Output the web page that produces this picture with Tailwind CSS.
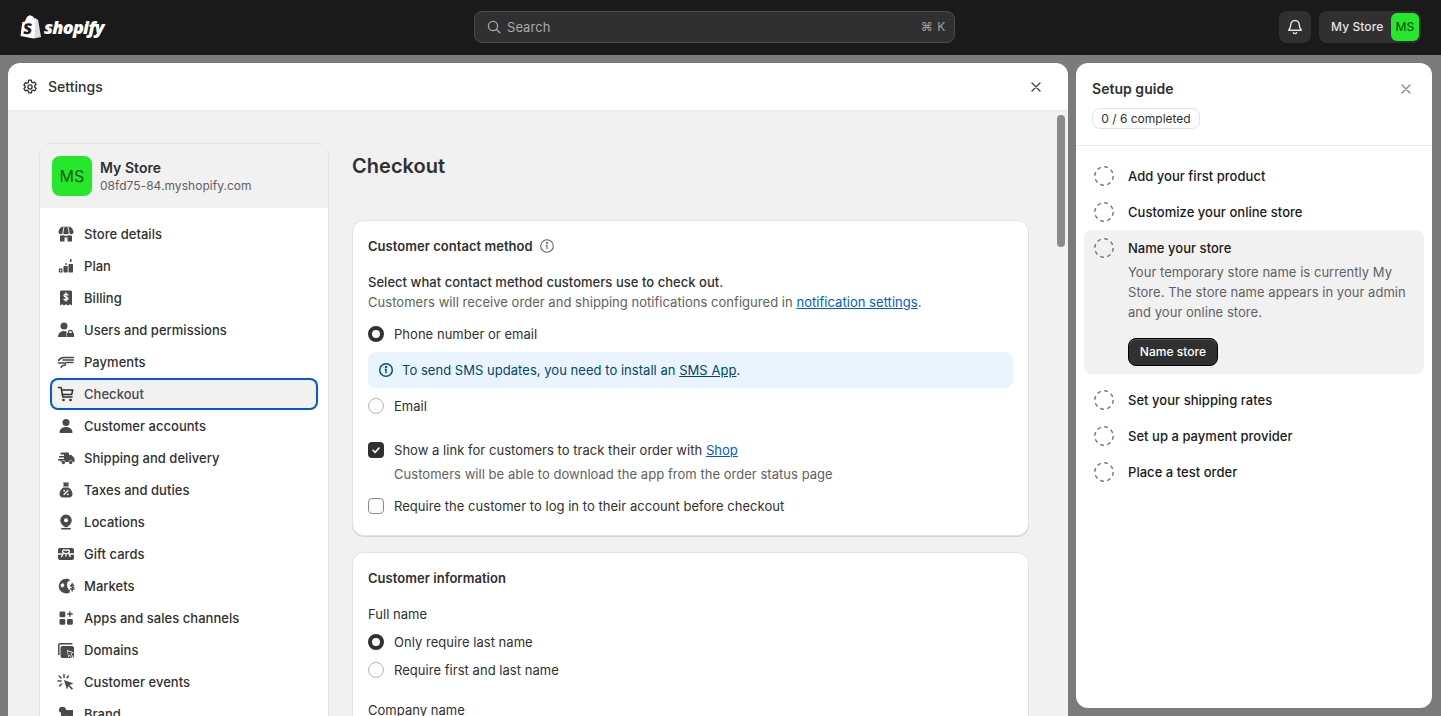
<!DOCTYPE html>
<html lang="en">
<head>
    <meta charset="UTF-8">
    <meta name="viewport" content="width=device-width, initial-scale=1.0">
    <title>Settings - Checkout</title>
    <script src="https://cdn.jsdelivr.net/npm/@tailwindcss/browser@4"></script>
</head>
<body class="h-[716px] overflow-hidden bg-[#7b7b7b] font-['Inter',sans-serif] text-[13px] leading-5 tracking-[0.035px] text-[#303030]">

    <!-- Top bar -->
    <header class="flex h-[55px] items-center bg-[#1a1a1a] pb-[1px] pl-5 pr-5">
        <div class="flex w-[454px] items-center">
            <svg class="h-[25px] w-[22px]" viewBox="0 0 22 25">
                <path fill="#fff" d="M15.4 3.1 14.2 3.4C13.8 2.2 13.1 1 11.8 1h-.2C11.2.5 10.7.3 10.3.3 7.2.3 5.700 4.200 5.200 6.200L3 6.900c-.7.2-.7.200-.8.900L.5 21l13.300 2.500L21 22 18.100 4.800c-.1-.2-2.200-.5-2.700-1.700Z"/>
                <path fill="#1a1a1a" d="M15.600 3.200 14.300 23.300 21.300 21.800 18.300 4.900C18.200 4.700 18 4.600 17.900 4.600Z" opacity=".15"/>
                <text x="4.800" y="19" fill="#1a1a1a" font-family="Open Sans" font-weight="800" font-size="15" transform="skewX(-6)">S</text>
            </svg>
            <span class="ml-[2px] font-['Open_Sans',sans-serif] text-[18px] font-extrabold italic tracking-[-0.75px] text-white">shopify</span>
        </div>
        <div class="flex h-8 w-[481px] items-center rounded-lg border border-[#4a4a4a] bg-[#303030] pl-3 pr-2 text-[#a8a8a8]">
            <svg class="h-[14px] w-[14px]" viewBox="0 0 14 14" fill="none" stroke="#a8a8a8" stroke-width="1.300" stroke-linecap="round"><circle cx="6" cy="6" r="4.600"/><path d="m9.500 9.500 3.300 3.300"/></svg>
            <span class="ml-[6px] text-[13px]">Search</span>
            <span class="ml-auto text-[12px] tracking-[0.6px] text-[#a0a0a0]">⌘ K</span>
        </div>
        <div class="ml-auto flex items-center gap-2">
            <button class="flex h-8 w-8 items-center justify-center rounded-lg bg-[#303030]">
                <svg class="h-4 w-4" viewBox="0 0 16 16" fill="none" stroke="#e3e3e3" stroke-width="1.400" stroke-linejoin="round"><path d="M8 1.500c-2.600 0-4.300 2-4.300 4.500 0 2.500-.7 3.700-2 5.200h12.600c-1.300-1.500-2-2.700-2-5.200 0-2.500-1.700-4.500-4.300-4.500Z"/><path d="M6.200 13.200c.4 1 1 1.400 1.800 1.400s1.400-.4 1.800-1.400"/></svg>
            </button>
            <button class="flex h-8 w-[102px] items-center justify-between rounded-lg bg-[#303030] pl-3 pr-[2px] text-[#e3e3e3]">
                <span class="text-[12px] font-medium tracking-[0.1px]">My Store</span>
                <span class="flex h-7 w-7 items-center justify-center rounded-md bg-[#25e82c] text-[12px] font-medium text-[#0c5a10]">MS</span>
            </button>
        </div>
    </header>

    <div class="flex gap-2 pl-2 pt-2">
        <!-- Settings panel -->
        <section class="flex h-[653px] w-[1060px] flex-col overflow-hidden rounded-t-xl bg-white">
            <div class="flex h-12 shrink-0 items-center border-b border-[#ebebeb] pl-[14px] pr-[26px]">
                <svg class="h-4 w-4" viewBox="0 0 16 16" fill="none" stroke="#303030" stroke-width="1.300" stroke-linejoin="round"><path d="M6.700 1.200h2.600l.4 1.900 1.300.7 1.800-.6 1.300 2.300-1.400 1.300v1.400l1.400 1.300-1.300 2.300-1.800-.6-1.300.7-.4 1.900H6.700l-.4-1.900-1.300-.7-1.800.6-1.300-2.300 1.400-1.300V7.300L1.900 6l1.300-2.300 1.800.6 1.300-.7Z"/><circle cx="8" cy="8" r="2.100"/></svg>
                <span class="ml-[10px] text-[14px] font-medium">Settings</span>
                <svg class="ml-auto h-3 w-3" viewBox="0 0 12 12" fill="none" stroke="#4a4a4a" stroke-width="1.400" stroke-linecap="round"><path d="m2 2 8 8M10 2l-8 8"/></svg>
            </div>

            <div class="relative flex min-h-0 flex-1 items-start gap-[23px] overflow-hidden bg-[#f1f1f1] pl-[31px]">
                <!-- Sidebar -->
                <aside class="mt-8 w-[290px] shrink-0 overflow-hidden rounded-t-xl border border-[#e3e3e3] bg-white">
                    <div class="flex h-[64px] items-center bg-[#f1f1f1] pl-3">
                        <span class="flex h-10 w-10 items-center justify-center rounded-lg bg-[#25e82c] text-[16px] text-[#0c5a10]">MS</span>
                        <div class="ml-2">
                            <div class="text-[14px] font-semibold">My Store</div>
                            <div class="text-[12px] leading-4 text-[#616161]">08fd75-84.myshopify.com</div>
                        </div>
                    </div>
                    <nav class="flex flex-col px-[10px] pt-[10px] font-medium text-[#303030]">
                        <a class="flex h-8 items-center gap-2 px-[6px]"><svg class="h-5 w-5" viewBox="0 0 20 20" fill="#4a4a4a"><path d="M6 2.800h8c1.500.6 2.800 2.500 3.500 4.700.2 1.500-.8 2.700-2 2.700-.9 0-1.800-.6-2.300-1.300-.4.700-2.200 1.300-3.200 1.300s-2.800-.6-3.200-1.300c-.5.700-1.400 1.300-2.300 1.300-1.200 0-2.200-1.200-2-2.700C3.200 5.300 4.500 3.400 6 2.800Z"/><path fill="none" stroke="#fff" stroke-width=".9" d="M8 3 6.800 9M12 3l1.200 6"/><path fill-rule="evenodd" d="M4 11.600c1.100.3 2.100.1 3-.5.900.6 2 .9 3 .9s2.100-.3 3-.9c.9.6 1.900.8 3 .5V17.500H4Zm4.500 1.900v4h3v-4Z"/></svg><span>Store details</span></a>
                        <a class="flex h-8 items-center gap-2 px-[6px]"><svg class="h-5 w-5" viewBox="0 0 20 20" fill="#4a4a4a"><rect x="12.500" y="8" width="4.500" height="8.500" rx=".7"/><rect x="7.500" y="10" width="4.200" height="6.500" rx=".7"/><path fill-rule="evenodd" d="M3.500 12.500h3v4h-3a.7.7 0 0 1-.7-.7v-2.600c0-.4.300-.7.700-.7Zm.5 1.200v1.600h1.300v-1.600Z"/><path d="M14 3h1.500v3H14zM9 7.500l1.500-.5.500 1.500-1.500.5z"/></svg><span>Plan</span></a>
                        <a class="flex h-8 items-center gap-2 px-[6px]"><svg class="h-5 w-5" viewBox="0 0 20 20"><path fill="#4a4a4a" d="M5.500 2.500h9c.8 0 1.500.7 1.500 1.500v13.500l-2-1.300-2 1.300-2-1.300-2 1.300-2-1.300-2 1.300V4c0-.8.700-1.500 1.500-1.500Z"/><path fill="none" stroke="#fff" stroke-width="1.300" stroke-linecap="round" d="M12 7c-.4-.6-1.100-.9-2-.9-1.100 0-2 .5-2 1.500 0 2 4 1 4 3 0 1-.9 1.500-2 1.500-.9 0-1.600-.3-2-.9M10 5v8"/></svg><span>Billing</span></a>
                        <a class="flex h-8 items-center gap-2 px-[6px]"><svg class="h-5 w-5" viewBox="0 0 20 20" fill="#4a4a4a"><circle cx="8" cy="6" r="3.500"/><path d="M2 17c0-3.500 2.500-6 6-6 1 0 1.800.2 2.500.5V17Z"/><path fill-rule="evenodd" d="M12 13v-.8a2.500 2.500 0 0 1 5 0v.8h1v4h-7v-4Zm1.300 0h2.400v-.8a1.200 1.200 0 0 0-2.400 0Z"/></svg><span>Users and permissions</span></a>
                        <a class="flex h-8 items-center gap-2 px-[6px]"><svg class="h-5 w-5" viewBox="0 0 20 20" fill="none" stroke="#4a4a4a" stroke-width="1.500" stroke-linecap="round" stroke-linejoin="round"><path d="M2.500 8.500C4 6.500 6 5.500 8 5.500h9.500"/><path d="M7 8h10.500M10 10.500h7"/><path d="M2.500 11h5.500c1 0 1.500.6 1.500 1.200S9 13.500 8 13.500H6.500l-1.500 2"/></svg><span>Payments</span></a>
                        <a class="flex h-8 items-center gap-2 rounded-lg bg-[#f1f1f1] px-[6px] ring-2 ring-inset ring-[#005bd3]"><svg class="h-5 w-5" viewBox="0 0 20 20" fill="none" stroke="#303030" stroke-width="1.500" stroke-linecap="round" stroke-linejoin="round"><path d="M2.500 3.500h1.800c.5 0 .9.300 1 .8l1.500 8.700h9.200"/><path d="M5.700 6h11l-1 4.500H6.500"/><circle cx="7.500" cy="16" r=".6"/><circle cx="14.500" cy="16" r=".6"/></svg><span class="text-[#4a4a4a]">Checkout</span></a>
                        <a class="flex h-8 items-center gap-2 px-[6px]"><svg class="h-5 w-5" viewBox="0 0 20 20" fill="#4a4a4a"><circle cx="10" cy="6.500" r="3.500"/><path d="M3.500 16.500c0-3.300 2.900-5.500 6.500-5.500s6.500 2.200 6.500 5.500c0 .3-.2.500-.5.500H4c-.3 0-.5-.2-.5-.5Z"/></svg><span>Customer accounts</span></a>
                        <a class="flex h-8 items-center gap-2 px-[6px]"><svg class="h-5 w-5" viewBox="0 0 20 20" fill="#4a4a4a"><path d="M5.500 4.500h6.500c.6 0 1 .4 1 1V7h2.500l3 3.500V14h-1.600a2.300 2.300 0 0 0-4.400 0H9.600a2.300 2.300 0 0 0-4.400 0H4.500v-1.500H2V11h6V9.500H3V8h5V6.500H4.500v-1c0-.6.400-1 1-1Z"/><circle cx="7.400" cy="14.500" r="1.700"/><circle cx="14.700" cy="14.500" r="1.700"/></svg><span>Shipping and delivery</span></a>
                        <a class="flex h-8 items-center gap-2 px-[6px]"><svg class="h-5 w-5" viewBox="0 0 20 20"><path fill="#4a4a4a" d="M7 2.500h6l-1 2.500h.7v1.500H7.300V5H8Zm.5 5h5c2.500 1.500 4 4 4 6.500 0 2-1.500 3.500-3.500 3.500H7c-2 0-3.500-1.500-3.500-3.500 0-2.500 1.500-5 4-6.500Z"/><path fill="none" stroke="#fff" stroke-width="1.200" stroke-linecap="round" d="m8 14.500 4-4"/><circle cx="8.200" cy="10.700" r=".9" fill="#fff"/><circle cx="11.800" cy="14.300" r=".9" fill="#fff"/></svg><span>Taxes and duties</span></a>
                        <a class="flex h-8 items-center gap-2 px-[6px]"><svg class="h-5 w-5" viewBox="0 0 20 20"><path fill="#4a4a4a" d="M10 2.500a5.800 5.800 0 0 1 5.800 5.800c0 2.800-2.200 5.200-4.800 7H9c-2.600-1.800-4.800-4.200-4.800-7A5.800 5.800 0 0 1 10 2.500Z"/><circle cx="10" cy="8.300" r="2" fill="#fff"/><rect x="5" y="16" width="10" height="1.500" rx=".75" fill="#4a4a4a"/></svg><span>Locations</span></a>
                        <a class="flex h-8 items-center gap-2 px-[6px]"><svg class="h-5 w-5" viewBox="0 0 20 20"><rect x="2" y="4" width="16" height="12" rx="2" fill="#4a4a4a"/><path fill="none" stroke="#fff" stroke-width="1.300" d="M10 6.500 8.500 6c-1.700-.4-2.500 1.500-1.500 2.500L10 10l3-1.500c1-1 .2-2.900-1.500-2.500ZM2 10h5l-1.500 3M18 10h-5l1.500 3M10 10v2.500"/></svg><span>Gift cards</span></a>
                        <a class="flex h-8 items-center gap-2 px-[6px]"><svg class="h-5 w-5" viewBox="0 0 20 20"><path fill="#4a4a4a" d="M10 2.800c1.600 0 3.100.5 4.300 1.400-1.300.3-3.100 1.700-3.300 3.500-.3 2.300.7 5.500 3 6.600l-.5 2.400c-1 .5-2.200.7-3.500.7a7.300 7.300 0 0 1 0-14.600Z"/><path fill="#fff" d="M4.500 8.500 7 7l1.500 2L7 11.500 5 11Z"/><path fill="none" stroke="#4a4a4a" stroke-width="1.300" stroke-linecap="round" d="M17.800 9.500c-.4-.6-1-.8-1.700-.8-.8 0-1.400.4-1.400 1.100 0 1.500 3.300.8 3.300 2.500 0 .8-.8 1.200-1.700 1.200-.8 0-1.400-.3-1.800-.8M16.200 7.500v7.500"/></svg><span>Markets</span></a>
                        <a class="flex h-8 items-center gap-2 px-[6px]"><svg class="h-5 w-5" viewBox="0 0 20 20" fill="#4a4a4a"><rect x="3.500" y="3.500" width="5.800" height="5.800" rx="1.300"/><rect x="3.500" y="11" width="5.800" height="5.800" rx="1.300"/><rect x="11" y="11" width="5.800" height="5.800" rx="1.300"/><path d="M13.200 3.200h1.400v2.100h2.100v1.400h-2.100v2.100h-1.400V6.700h-2.100V5.300h2.100Z"/></svg><span>Apps and sales channels</span></a>
                        <a class="flex h-8 items-center gap-2 px-[6px]"><svg class="h-5 w-5" viewBox="0 0 20 20"><path fill="#4a4a4a" d="M4 3h12.500v1.500H4c-.3 0-.5.200-.5.500v10H2V5c0-1.100.9-2 2-2Z"/><path fill="#4a4a4a" d="M6.500 6H16c1.100 0 2 .9 2 2v8c0 1.100-.9 2-2 2H6.500c-1.100 0-2-.9-2-2V8c0-1.100.9-2 2-2Z"/><path fill="#fff" d="m11 10 7 2.500-2.800 1.200 2 3-1.400 1.800-2.200-3-1.300 2.300Z"/><path fill="#4a4a4a" d="m11.800 11.200 4.600 1.600-2 .9 2 2.900-.7.800-2.100-2.900-1 1.700Z"/></svg><span>Domains</span></a>
                        <a class="flex h-8 items-center gap-2 px-[6px]"><svg class="h-5 w-5" viewBox="0 0 20 20"><path fill="#4a4a4a" d="m8 8 9.500 3.500-4 1.500 3.500 3.500-1.300 1.300L12.300 14l-1.300 3.700Z"/><path fill="none" stroke="#4a4a4a" stroke-width="1.500" stroke-linecap="round" d="M8 2.500v3M3 4l2.200 2M2 9h3M3.500 14l2-2M12.500 4 11 5.700"/></svg><span>Customer events</span></a>
                        <a class="flex h-8 items-center gap-2 px-[6px]"><svg class="h-5 w-5" viewBox="0 0 20 20" fill="#4a4a4a"><path d="M7 3a3 3 0 0 1 3 3H17v11H5v-8.200A3 3 0 0 1 7 3Z"/><path fill="#fff" d="m7 15 3-3.500 2 2 1.500-1.500L16 15Z"/></svg><span>Brand</span></a>
                    </nav>
                </aside>

                <!-- Main column -->
                <main class="w-[677px] shrink-0">
                    <h1 class="mt-[41px] text-[20px] leading-7 font-semibold">Checkout</h1>

                    <div class="mt-10 rounded-xl border border-[#e3e3e3] bg-white px-[15px] pt-[15px] pb-[19px] shadow-[0_1px_0_#d4d4d4]">
                        <div class="flex items-center gap-[6px] font-semibold">
                            <span>Customer contact method</span>
                            <svg class="h-4 w-4" viewBox="0 0 16 16" fill="none" stroke="#616161" stroke-width="1.100" stroke-linecap="round"><circle cx="8" cy="8" r="6.300"/><path d="M7.200 7.400H8v3.400"/><circle cx="8" cy="5" r=".5" fill="#616161"/></svg>
                        </div>
                        <p class="mt-4 font-medium">Select what contact method customers use to check out.</p>
                        <p class="text-[#616161]">Customers will receive order and shipping notifications configured in <a class="text-[#005bd3] underline">notification settings</a>.</p>

                        <div class="mt-[10px] flex h-6 items-center gap-[10px]">
                            <span class="h-4 w-4 rounded-full border-[4px] border-[#303030] bg-white"></span>
                            <span>Phone number or email</span>
                        </div>
                        <div class="mt-[6px] flex h-9 items-center gap-2 rounded-lg bg-[#eaf4ff] px-[10px] text-[#00476b]">
                            <svg class="h-4 w-4" viewBox="0 0 16 16" fill="none" stroke="#00527c" stroke-width="1.500" stroke-linecap="round"><circle cx="8" cy="8" r="6.300"/><path d="M7.300 7.500H8v3.200"/><circle cx="8" cy="5" r=".5" fill="#00527c"/></svg>
                            <span>To send SMS updates, you need to install an <a class="underline">SMS App</a>.</span>
                        </div>
                        <div class="mt-[6px] flex h-6 items-center gap-[10px]">
                            <span class="h-4 w-4 rounded-full border border-[#b5b5b5] bg-[#fdfdfd]"></span>
                            <span>Email</span>
                        </div>

                        <div class="mt-[22px] flex h-5 items-center gap-[10px]">
                            <span class="flex h-4 w-4 items-center justify-center rounded bg-[#303030]">
                                <svg class="h-3 w-3" viewBox="0 0 12 12" fill="none" stroke="#fff" stroke-width="1.600" stroke-linecap="round" stroke-linejoin="round"><path d="m3 6.300 2.100 2.100L9 4"/></svg>
                            </span>
                            <span>Show a link for customers to track their order with <a class="text-[#005bd3] underline">Shop</a></span>
                        </div>
                        <p class="mt-1 ml-[26px] text-[#616161]">Customers will be able to download the app from the order status page</p>
                        <div class="mt-3 flex h-5 items-center gap-[10px]">
                            <span class="h-4 w-4 rounded border border-[#8a8a8a] bg-[#fdfdfd]"></span>
                            <span>Require the customer to log in to their account before checkout</span>
                        </div>
                    </div>

                    <div class="mt-4 rounded-xl border border-[#e3e3e3] bg-white px-[15px] pt-[15px] pb-5">
                        <div class="font-semibold">Customer information</div>
                        <p class="mt-4">Full name</p>
                        <div class="mt-[6px] flex h-6 items-center gap-[10px]">
                            <span class="h-4 w-4 rounded-full border-[4px] border-[#303030] bg-white"></span>
                            <span>Only require last name</span>
                        </div>
                        <div class="mt-1 flex h-6 items-center gap-[10px]">
                            <span class="h-4 w-4 rounded-full border border-[#b5b5b5] bg-[#fdfdfd]"></span>
                            <span>Require first and last name</span>
                        </div>
                        <p class="mt-[18px]">Company name</p>
                    </div>
                </main>

                <!-- Scrollbar -->
                <div class="absolute right-[3px] top-1 h-[132px] w-2 rounded-full bg-[#8a8a8a]"></div>
            </div>
        </section>

        <!-- Setup guide -->
        <aside class="flex h-[645px] w-[356px] flex-col rounded-xl bg-white">
            <div class="border-b border-[#ebebeb] px-4 pb-4 pt-[15px]">
                <div class="flex h-[22px] items-center justify-between pr-[4px]">
                    <span class="text-[14px] font-semibold">Setup guide</span>
                    <svg class="h-3 w-3" viewBox="0 0 12 12" fill="none" stroke="#8a8a8a" stroke-width="1.400" stroke-linecap="round"><path d="m2 2 8 8M10 2l-8 8"/></svg>
                </div>
                <span class="mt-2 inline-flex h-[21px] w-[108px] items-center justify-center rounded-lg border border-[#e3e3e3] text-[12px] tracking-normal">0 / 6 completed</span>
            </div>
            <ul class="px-2 pt-3 font-medium text-[#1a1a1a]">
                <li class="flex h-9 items-center gap-[14px] px-[10px]"><svg class="h-5 w-5" viewBox="0 0 20 20" fill="none" stroke="#7a7a7a" stroke-width="1.500"><circle cx="10" cy="10" r="9.200" stroke-dasharray="3.800 3.420"/></svg><span>Add your first product</span></li>
                <li class="flex h-9 items-center gap-[14px] px-[10px]"><svg class="h-5 w-5" viewBox="0 0 20 20" fill="none" stroke="#7a7a7a" stroke-width="1.500"><circle cx="10" cy="10" r="9.200" stroke-dasharray="3.800 3.420"/></svg><span>Customize your online store</span></li>
                <li class="rounded-lg bg-[#f1f1f1] px-[10px] pb-2">
                    <div class="flex h-9 items-center gap-[14px]"><svg class="h-5 w-5" viewBox="0 0 20 20" fill="none" stroke="#7a7a7a" stroke-width="1.500"><circle cx="10" cy="10" r="9.200" stroke-dasharray="3.800 3.420"/></svg><span>Name your store</span></div>
                    <p class="ml-[34px] -mt-1 font-normal text-[#616161]">Your temporary store name is currently My Store. The store name appears in your admin and your online store.</p>
                    <button class="ml-[34px] mt-4 flex h-7 w-[90px] items-center justify-center rounded-lg border border-black bg-[#303030] text-[12px] font-medium text-white shadow-[inset_0_1px_0_#5a5a5a]">Name store</button>
                </li>
                <li class="flex h-9 items-center gap-[14px] px-[10px] mt-2"><svg class="h-5 w-5" viewBox="0 0 20 20" fill="none" stroke="#7a7a7a" stroke-width="1.500"><circle cx="10" cy="10" r="9.200" stroke-dasharray="3.800 3.420"/></svg><span>Set your shipping rates</span></li>
                <li class="flex h-9 items-center gap-[14px] px-[10px]"><svg class="h-5 w-5" viewBox="0 0 20 20" fill="none" stroke="#7a7a7a" stroke-width="1.500"><circle cx="10" cy="10" r="9.200" stroke-dasharray="3.800 3.420"/></svg><span>Set up a payment provider</span></li>
                <li class="flex h-9 items-center gap-[14px] px-[10px]"><svg class="h-5 w-5" viewBox="0 0 20 20" fill="none" stroke="#7a7a7a" stroke-width="1.500"><circle cx="10" cy="10" r="9.200" stroke-dasharray="3.800 3.420"/></svg><span>Place a test order</span></li>
            </ul>
        </aside>
    </div>

</body>
</html>
